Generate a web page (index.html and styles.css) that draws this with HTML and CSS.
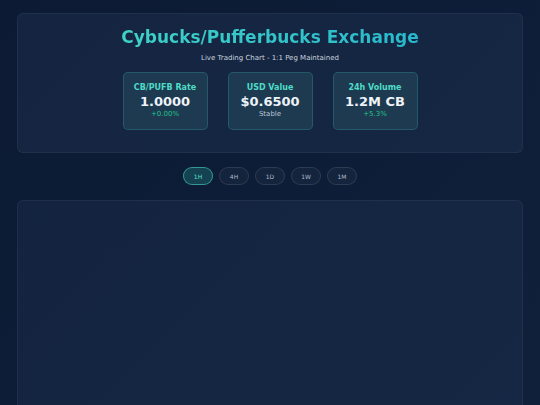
FILE: index.html
```html
<!DOCTYPE html>
<html lang="en">
<head>
  <meta charset="UTF-8">
  <meta name="viewport" content="width=device-width, initial-scale=1.0">
  <title>Cybucks/Pufferbucks Exchange</title>
  <link rel="stylesheet" href="styles.css">
</head>
<body>

  <div class="header">
    <h1 class="title">Cybucks/Pufferbucks Exchange</h1>
    <p class="subtitle">Live Trading Chart - 1:1 Peg Maintained</p>

    <div class="stats">
      <div class="stat-card">
        <div class="stat-label">CB/PUFB Rate</div>
        <div class="stat-value">1.0000</div>
        <div class="stat-change up">+0.00%</div>
      </div>
      <div class="stat-card">
        <div class="stat-label">USD Value</div>
        <div class="stat-value">$0.6500</div>
        <div class="stat-change">Stable</div>
      </div>
      <div class="stat-card">
        <div class="stat-label">24h Volume</div>
        <div class="stat-value">1.2M CB</div>
        <div class="stat-change up">+5.3%</div>
      </div>
    </div>
  </div>

  <div class="timeframes">
    <button class="tf-btn active">1H</button>
    <button class="tf-btn">4H</button>
    <button class="tf-btn">1D</button>
    <button class="tf-btn">1W</button>
    <button class="tf-btn">1M</button>
  </div>

  <div class="chart-panel"></div>

</body>
</html>
```

FILE: styles.css
```css
* {
  box-sizing: border-box;
}

body {
  margin: 0;
  padding: 13px 17px 0;
  font-family: "DejaVu Sans", Verdana, sans-serif;
  background: linear-gradient(135deg, #0c1a33 0%, #10203b 100%);
  color: #e6edf5;
  height: 405px;
  overflow: hidden;
}

.header {
  background-color: rgba(30, 50, 82, 0.45);
  border: 1px solid rgba(255, 255, 255, 0.05);
  border-radius: 6px;
  padding: 13px 20px 22px;
  text-align: center;
}

.title {
  margin: 0;
  font-size: 17px;
  line-height: 1.2;
  font-weight: bold;
  background: linear-gradient(90deg, #45d8c4, #22b2cf);
  -webkit-background-clip: text;
  background-clip: text;
  color: transparent;
}

.subtitle {
  margin: 7px 0 0;
  font-size: 7px;
  line-height: 1.2;
  color: #c9d3df;
}

.stats {
  display: flex;
  justify-content: center;
  gap: 20px;
  margin-top: 9px;
}

.stat-card {
  min-width: 85px;
  padding: 10px 10px 11px;
  background-color: rgba(40, 85, 100, 0.45);
  border: 1px solid rgba(64, 200, 190, 0.22);
  border-radius: 5px;
}

.stat-label {
  font-size: 8px;
  line-height: 1.2;
  font-weight: bold;
  color: #4fdcc6;
}

.stat-value {
  margin-top: 3px;
  font-size: 13px;
  line-height: 1.1;
  font-weight: bold;
  color: #eef3f8;
}

.stat-change {
  font-size: 7px;
  line-height: 1.2;
  color: #b8c4d2;
}

.stat-change.up {
  color: #22c38a;
}

.timeframes {
  display: flex;
  justify-content: center;
  gap: 6px;
  margin: 14px 0 15px;
}

.tf-btn {
  width: 30px;
  height: 18px;
  padding: 0;
  font-family: "DejaVu Sans", Verdana, sans-serif;
  font-size: 6px;
  color: #aebacb;
  background-color: rgba(255, 255, 255, 0.03);
  border: 1px solid rgba(255, 255, 255, 0.1);
  border-radius: 9px;
  cursor: pointer;
}

.tf-btn.active {
  color: #5ee0cc;
  background-color: rgba(45, 180, 165, 0.25);
  border-color: rgba(70, 210, 190, 0.6);
}

.chart-panel {
  height: 220px;
  background-color: rgba(30, 50, 82, 0.4);
  border: 1px solid rgba(255, 255, 255, 0.05);
  border-bottom: none;
  border-radius: 6px 6px 0 0;
}
```
